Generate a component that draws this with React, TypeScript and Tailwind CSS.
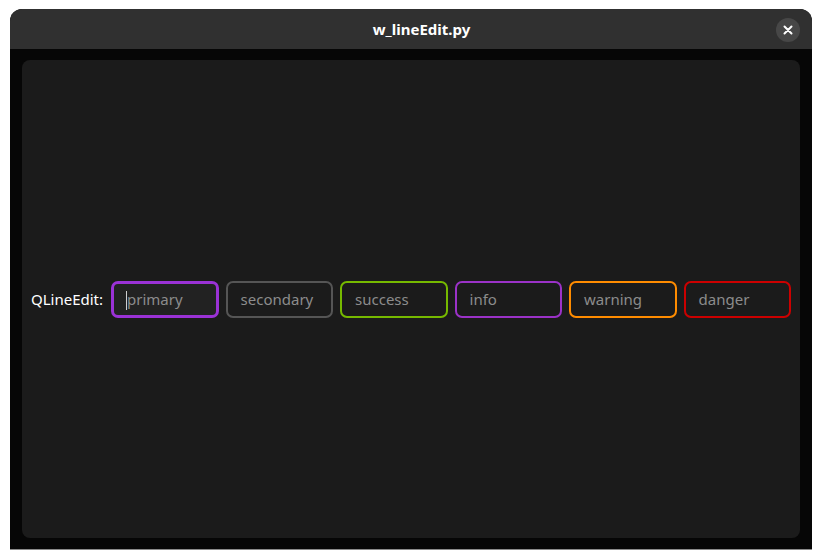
import React from "react";

const FIELDS: { name: string; border: string; focus?: boolean }[] = [
  { name: "primary", border: "border-[#9b32d6]", focus: true },
  { name: "secondary", border: "border-[#555555]" },
  { name: "success", border: "border-[#76b900]" },
  { name: "info", border: "border-[#9b32c8]" },
  { name: "warning", border: "border-[#ff8c00]" },
  { name: "danger", border: "border-[#cc0000]" },
];

export default function App() {
  return (
    <div className="h-[560px] w-[822px] bg-white pt-[9px] pl-[10px] font-['Noto_Sans',sans-serif]">
      <div className="flex h-[541px] w-[802px] flex-col overflow-hidden rounded-t-[12px] border-b border-[#8a8a8a] bg-[#060606]">
        {/* title bar */}
        <div className="relative flex h-[40px] shrink-0 items-center justify-center bg-[#303030] pl-[21px]">
          <span className="text-[15px] font-bold text-white">w_lineEdit.py</span>
          <button
            type="button"
            className="absolute right-[12px] top-[9px] flex h-[24px] w-[24px] items-center justify-center rounded-full bg-[#474747]"
          >
            <svg width="10" height="10" viewBox="0 0 10 10">
              <path d="M1.5 1.5 L8.5 8.5 M8.5 1.5 L1.5 8.5" stroke="white" strokeWidth="2" strokeLinecap="round" />
            </svg>
          </button>
        </div>

        <div className="flex-1 px-[12px] pt-[11px] pb-[11px]">
          <div className="flex h-full items-center rounded-[8px] bg-[#1b1b1b] pl-[9px]">
            <span className="mr-[8px] text-[15px] text-white">QLineEdit:</span>
            <div className="flex gap-[7px]">
              {FIELDS.map((f) => (
                <div
                  key={f.name}
                  className={[
                    "relative flex h-[37px] w-[107.5px] items-center rounded-[7px] border-2 pl-[13px] text-[15px] text-[#8c8c8c]",
                    f.border,
                    f.focus ? "border-[3px] bg-[#222222] pl-[12px]" : "",
                  ].join(" ")}
                >
                  {f.focus && <span className="absolute left-[12px] top-[7px] h-[19px] w-px bg-[#cfcfcf]" />}
                  {f.name}
                </div>
              ))}
            </div>
          </div>
        </div>
      </div>
    </div>
  );
}
